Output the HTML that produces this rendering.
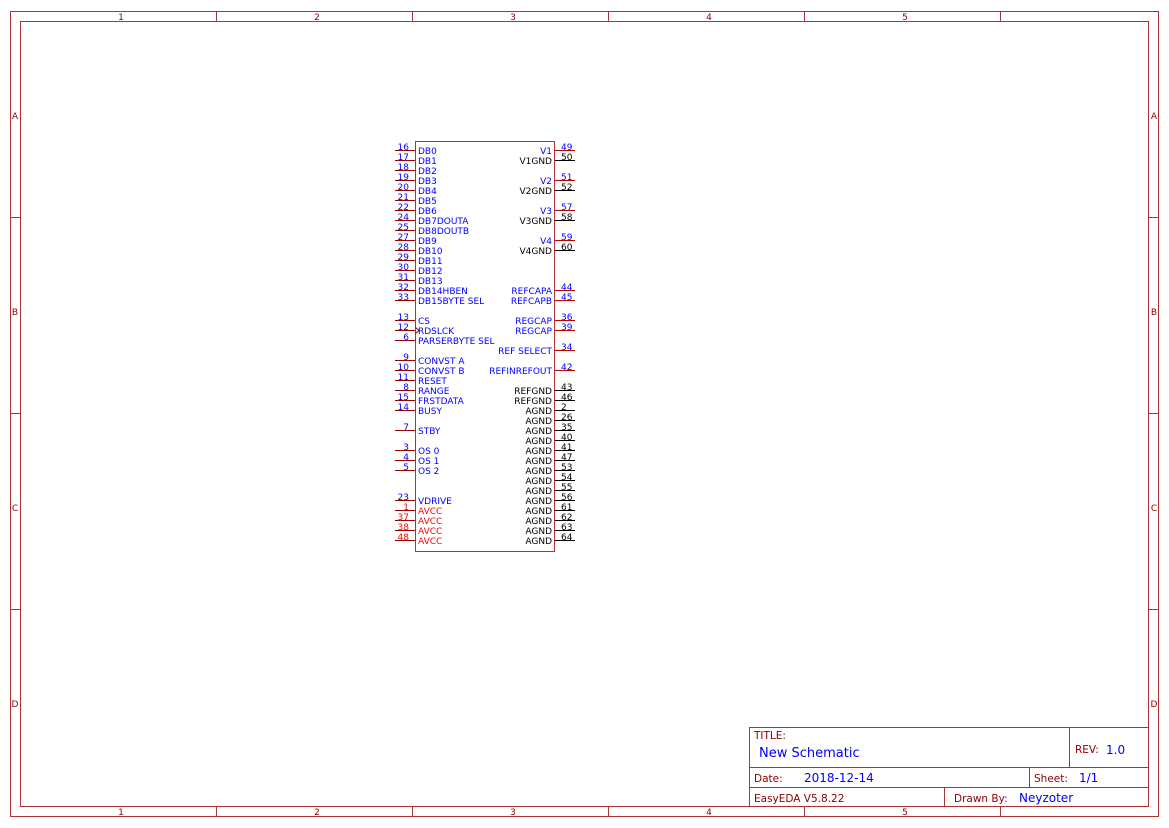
<!DOCTYPE html>
<html><head><meta charset="utf-8"><style>
html,body{margin:0;padding:0;background:#fff;width:1169px;height:828px;overflow:hidden}
svg{display:block}
text{font-family:"DejaVu Sans","Liberation Sans",sans-serif;font-size:9px}
.b{fill:#0000ff}.k{fill:#000}.r{fill:#ff0000}.m{fill:#8b0000}
.f{stroke:#a33;fill:none;stroke-width:1}
</style></head><body>
<svg width="1169" height="828" viewBox="0 0 1169 828">
<rect class="f" x="10.5" y="11.5" width="1148" height="805"/>
<rect class="f" x="20.5" y="21.5" width="1128" height="785"/>
<g class="f">
<path d="M216.5 11.5V21.5M412.5 11.5V21.5M608.5 11.5V21.5M804.5 11.5V21.5M1000.5 11.5V21.5"/>
<path d="M216.5 806.5V816.5M412.5 806.5V816.5M608.5 806.5V816.5M804.5 806.5V816.5M1000.5 806.5V816.5"/>
<path d="M10.5 217.5H20.5M10.5 413.5H20.5M10.5 609.5H20.5M1148.5 217.5H1158.5M1148.5 413.5H1158.5M1148.5 609.5H1158.5"/>
</g>
<g class="m" text-anchor="middle" style="font-size:9px">
<text x="121" y="20">1</text><text x="317" y="20">2</text><text x="513" y="20">3</text><text x="709" y="20">4</text><text x="905" y="20">5</text>
<text x="121" y="815">1</text><text x="317" y="815">2</text><text x="513" y="815">3</text><text x="709" y="815">4</text><text x="905" y="815">5</text>
<text x="15" y="119">A</text><text x="15" y="315">B</text><text x="15" y="511">C</text><text x="15" y="707">D</text>
<text x="1154" y="119">A</text><text x="1154" y="315">B</text><text x="1154" y="511">C</text><text x="1154" y="707">D</text>
</g>
<g class="f">
<rect x="749.5" y="727.5" width="399" height="79"/>
<path d="M749.5 767.5H1148.5M749.5 787.5H1148.5M1069.5 727.5V767.5M1029.5 767.5V787.5M944.5 787.5V806.5"/>
</g>
<text class="m" x="754" y="739" style="font-size:10.5px">TITLE:</text>
<text class="b" x="759" y="757" style="font-size:13px">New Schematic</text>
<text class="m" x="1075" y="753" style="font-size:10.5px">REV:</text>
<text class="b" x="1106" y="754" style="font-size:12px">1.0</text>
<text class="m" x="754" y="782" style="font-size:10.5px">Date:</text>
<text class="b" x="804" y="782" style="font-size:12px">2018-12-14</text>
<text class="m" x="1034" y="782" style="font-size:10.5px">Sheet:</text>
<text class="b" x="1079" y="782" style="font-size:12px">1/1</text>
<text class="m" x="754" y="802" style="font-size:10.5px">EasyEDA V5.8.22</text>
<text class="m" x="954" y="802" style="font-size:10.5px">Drawn By:</text>
<text class="b" x="1019" y="802" style="font-size:12px">Neyzoter</text>
<rect x="415.5" y="141.5" width="139" height="410" fill="none" stroke="#a33"/>
<g stroke="#900" stroke-width="1">
<path d="M395 150.5H415M395 160.5H415M395 170.5H415M395 180.5H415M395 190.5H415M395 200.5H415M395 210.5H415M395 220.5H415M395 230.5H415M395 240.5H415M395 250.5H415M395 260.5H415M395 270.5H415M395 280.5H415M395 290.5H415M395 300.5H415"/>
<path d="M395 320.5H415M395 330.5H415M395 340.5H415M395 360.5H415M395 370.5H415M395 380.5H415M395 390.5H415M395 400.5H415M395 410.5H415M395 430.5H415M395 450.5H415M395 460.5H415M395 470.5H415M395 500.5H415M395 510.5H415M395 520.5H415M395 530.5H415M395 540.5H415"/>
<path d="M555 150.5H575M555 180.5H575M555 210.5H575M555 240.5H575M555 290.5H575M555 300.5H575M555 320.5H575M555 330.5H575M555 350.5H575M555 370.5H575" stroke="#b00"/>
<path d="M415.5 327.5L419 330.5L415.5 333.5" fill="none"/>
</g>
<g stroke="#000" stroke-width="1">
<path d="M555 160.5H575M555 190.5H575M555 220.5H575M555 250.5H575M555 390.5H575M555 400.5H575M555 410.5H575M555 420.5H575M555 430.5H575M555 440.5H575M555 450.5H575M555 460.5H575M555 470.5H575M555 480.5H575M555 490.5H575M555 500.5H575M555 510.5H575M555 520.5H575M555 530.5H575M555 540.5H575"/>
</g>
<g class="b">
<text x="418" y="154">DB0</text><text x="418" y="164">DB1</text><text x="418" y="174">DB2</text><text x="418" y="184">DB3</text><text x="418" y="194">DB4</text><text x="418" y="204">DB5</text><text x="418" y="214">DB6</text><text x="418" y="224">DB7DOUTA</text><text x="418" y="234">DB8DOUTB</text><text x="418" y="244">DB9</text><text x="418" y="254">DB10</text><text x="418" y="264">DB11</text><text x="418" y="274">DB12</text><text x="418" y="284">DB13</text><text x="418" y="294">DB14HBEN</text><text x="418" y="304">DB15BYTE SEL</text>
<text x="418" y="324">CS</text><text x="418" y="334">RDSLCK</text><text x="418" y="344">PARSERBYTE SEL</text>
<text x="418" y="364">CONVST A</text><text x="418" y="374">CONVST B</text><text x="418" y="384">RESET</text><text x="418" y="394">RANGE</text><text x="418" y="404">FRSTDATA</text><text x="418" y="414">BUSY</text>
<text x="418" y="434">STBY</text><text x="418" y="454">OS 0</text><text x="418" y="464">OS 1</text><text x="418" y="474">OS 2</text><text x="418" y="504">VDRIVE</text>
</g>
<g class="r"><text x="418" y="514">AVCC</text><text x="418" y="524">AVCC</text><text x="418" y="534">AVCC</text><text x="418" y="544">AVCC</text></g>
<g class="b" text-anchor="end">
<text x="409" y="150">16</text><text x="409" y="160">17</text><text x="409" y="170">18</text><text x="409" y="180">19</text><text x="409" y="190">20</text><text x="409" y="200">21</text><text x="409" y="210">22</text><text x="409" y="220">24</text><text x="409" y="230">25</text><text x="409" y="240">27</text><text x="409" y="250">28</text><text x="409" y="260">29</text><text x="409" y="270">30</text><text x="409" y="280">31</text><text x="409" y="290">32</text><text x="409" y="300">33</text>
<text x="409" y="320">13</text><text x="409" y="330">12</text><text x="409" y="340">6</text><text x="409" y="360">9</text><text x="409" y="370">10</text><text x="409" y="380">11</text><text x="409" y="390">8</text><text x="409" y="400">15</text><text x="409" y="410">14</text><text x="409" y="430">7</text><text x="409" y="450">3</text><text x="409" y="460">4</text><text x="409" y="470">5</text><text x="409" y="500">23</text>
<text x="552" y="154">V1</text><text x="552" y="184">V2</text><text x="552" y="214">V3</text><text x="552" y="244">V4</text><text x="552" y="294">REFCAPA</text><text x="552" y="304">REFCAPB</text><text x="552" y="324">REGCAP</text><text x="552" y="334">REGCAP</text><text x="552" y="354">REF SELECT</text><text x="552" y="374">REFINREFOUT</text>
</g>
<g class="r" text-anchor="end"><text x="409" y="510">1</text><text x="409" y="520">37</text><text x="409" y="530">38</text><text x="409" y="540">48</text></g>
<g class="k" text-anchor="end">
<text x="552" y="164">V1GND</text><text x="552" y="194">V2GND</text><text x="552" y="224">V3GND</text><text x="552" y="254">V4GND</text>
<text x="552" y="394">REFGND</text><text x="552" y="404">REFGND</text><text x="552" y="414">AGND</text><text x="552" y="424">AGND</text><text x="552" y="434">AGND</text><text x="552" y="444">AGND</text><text x="552" y="454">AGND</text><text x="552" y="464">AGND</text><text x="552" y="474">AGND</text><text x="552" y="484">AGND</text><text x="552" y="494">AGND</text><text x="552" y="504">AGND</text><text x="552" y="514">AGND</text><text x="552" y="524">AGND</text><text x="552" y="534">AGND</text><text x="552" y="544">AGND</text>
</g>
<g class="b"><text x="561" y="150">49</text><text x="561" y="180">51</text><text x="561" y="210">57</text><text x="561" y="240">59</text><text x="561" y="290">44</text><text x="561" y="300">45</text><text x="561" y="320">36</text><text x="561" y="330">39</text><text x="561" y="350">34</text><text x="561" y="370">42</text></g>
<g class="k">
<text x="561" y="160">50</text><text x="561" y="190">52</text><text x="561" y="220">58</text><text x="561" y="250">60</text>
<text x="561" y="390">43</text><text x="561" y="400">46</text><text x="561" y="410">2</text><text x="561" y="420">26</text><text x="561" y="430">35</text><text x="561" y="440">40</text><text x="561" y="450">41</text><text x="561" y="460">47</text><text x="561" y="470">53</text><text x="561" y="480">54</text><text x="561" y="490">55</text><text x="561" y="500">56</text><text x="561" y="510">61</text><text x="561" y="520">62</text><text x="561" y="530">63</text><text x="561" y="540">64</text>
</g>
</svg>
</body></html>
